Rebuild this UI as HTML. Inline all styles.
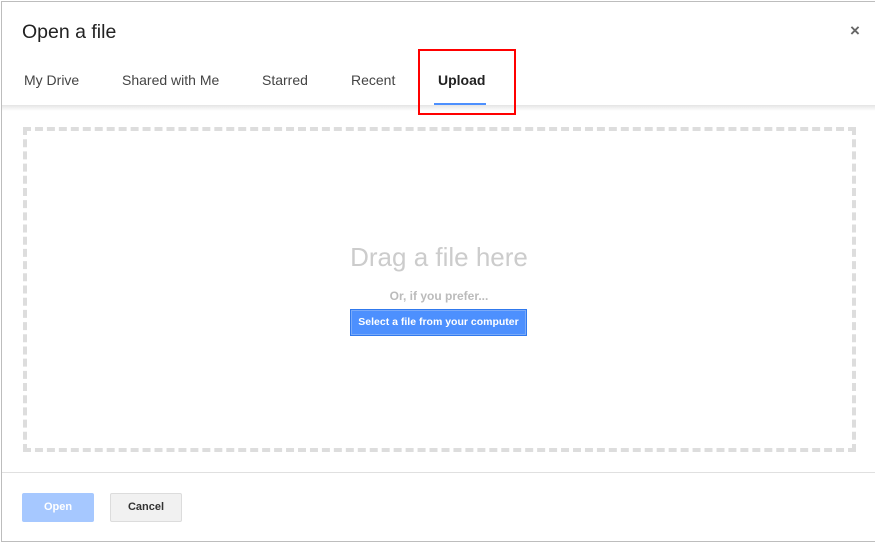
<!DOCTYPE html>
<html><head><style>
body{margin:0;width:875px;height:544px;background:#fff;position:relative;overflow:hidden;font-family:"Liberation Sans",Arial,sans-serif}
.dlg{position:absolute;left:1px;top:1px;width:880px;height:541px;border:1px solid #bdbdbd;box-sizing:border-box;background:#fff}
.title{position:absolute;left:22px;top:21px;font-size:19.5px;color:#222}
.x{position:absolute;left:850px;top:21px;font-size:17px;color:#666;font-weight:bold}
.tab{position:absolute;top:72px;font-size:14px;color:#444}
.hdr{position:absolute;left:2px;top:105px;width:875px;height:6px;background:linear-gradient(#e4e4e4,#fff)}
.ul{position:absolute;left:434px;top:103px;width:52px;height:2px;background:#4d90fe}
.red{position:absolute;left:418px;top:49px;width:98px;height:66px;border:2px solid #f00;box-sizing:border-box}
.drop{position:absolute;left:23px;top:127px;width:833px;height:325px;border:4px dashed #ddd;box-sizing:border-box}
.drag{position:absolute;left:0;width:878px;text-align:center;top:242px;font-size:26px;color:#ccc}
.or{position:absolute;left:0;width:878px;text-align:center;top:289px;font-size:12px;color:#bbb;font-weight:bold}
.sel{position:absolute;left:350px;top:309px;width:177px;height:27px;background:#4d90fe;border:1px solid #3079ed;box-shadow:inset 0 0 0 1px #7aaaf8;box-sizing:border-box;color:#fff;font-size:10.5px;font-weight:bold;text-align:center;line-height:25px}
.foot{position:absolute;left:2px;top:472px;width:875px;height:1px;background:#e0e0e0}
.open{position:absolute;left:22px;top:493px;width:72px;height:29px;background:#a6c8ff;border-radius:2px;color:#fff;font-size:11px;font-weight:bold;text-align:center;line-height:29px}
.cancel{position:absolute;left:110px;top:493px;width:72px;height:29px;background:#f1f1f1;border:1px solid #dcdcdc;box-sizing:border-box;border-radius:2px;color:#333;font-size:11px;font-weight:bold;text-align:center;line-height:27px}
</style></head><body>
<div class="dlg"></div>
<div class="title">Open a file</div>
<div class="x">×</div>
<div class="tab" style="left:24px">My Drive</div>
<div class="tab" style="left:122px">Shared with Me</div>
<div class="tab" style="left:262px">Starred</div>
<div class="tab" style="left:351px">Recent</div>
<div class="tab" style="left:438px;font-weight:bold;color:#222">Upload</div>
<div class="hdr"></div>
<div class="ul"></div>
<div class="red"></div>
<div class="drop"></div>
<div class="drag">Drag a file here</div>
<div class="or">Or, if you prefer...</div>
<div class="sel">Select a file from your computer</div>
<div class="foot"></div>
<div class="open">Open</div>
<div class="cancel">Cancel</div>
</body></html>
